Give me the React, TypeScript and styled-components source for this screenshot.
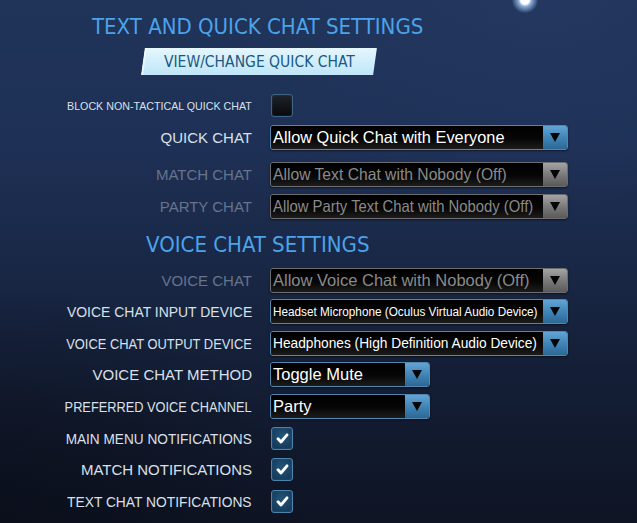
import React from 'react';
import styled, { createGlobalStyle } from 'styled-components';

const GlobalStyle = createGlobalStyle`
  html, body {
    margin: 0;
    padding: 0;
    background: #0f1628;
  }
  * {
    box-sizing: border-box;
  }
`;

const Screen = styled.div`
  position: relative;
  width: 637px;
  height: 523px;
  overflow: hidden;
  padding-top: 14px;
  font-family: 'Liberation Sans', Arial, sans-serif;
  background:
    radial-gradient(ellipse 420px 320px at 0% 100%, rgba(8, 10, 18, 0.55), transparent 75%),
    radial-gradient(ellipse 520px 300px at 85% 0%, rgba(38, 60, 104, 0.5), transparent 70%),
    linear-gradient(180deg, #203358 0%, #1e3055 28%, #182643 55%, #121b30 80%, #0e1424 100%);
`;

// bright spot of the menu item above, cut off by the top edge
const Glint = styled.div`
  position: absolute;
  left: 511px;
  top: -13px;
  width: 28px;
  height: 26px;
  border-radius: 50%;
  background: radial-gradient(circle at center, #ffffff 0 22%, rgba(170, 210, 255, 0.75) 34%, rgba(60, 120, 220, 0) 70%);
`;

const Heading = styled.h2<{ $indent: number }>`
  margin: 0 0 0 ${(p) => p.$indent}px;
  font-family: 'DejaVu Sans', sans-serif;
  font-stretch: condensed;
  font-weight: 400;
  font-size: 22px;
  line-height: 26px;
  color: #4ba3ea;
  white-space: nowrap;
`;

const VoiceHeading = styled(Heading)`
  margin-top: 10px;
  margin-bottom: 6px;
`;

const QuickChatButton = styled.button`
  display: flex;
  align-items: center;
  justify-content: center;
  width: 232px;
  height: 27px;
  margin: 8px 0 0 143px;
  padding: 0;
  border: none;
  transform: skewX(-8deg);
  background: linear-gradient(180deg, #e6f6fd 0%, #d2effb 45%, #c0e6f8 100%);
  box-shadow: inset 2px 0 0 rgba(255, 255, 255, 0.6);
  color: #1c5882;
  font-family: 'DejaVu Sans', sans-serif;
  font-stretch: condensed;
  font-size: 15.5px;

  span {
    transform: skewX(8deg);
  }
`;

const SettingsList = styled.div`
  margin-top: 15px;
`;

const SettingRow = styled.div<{ $gap?: number }>`
  display: grid;
  grid-template-columns: 252px max-content;
  column-gap: 18px;
  align-items: center;
  height: 31.6px;
  margin-top: ${(p) => p.$gap ?? 0}px;
`;

const Label = styled.span<{ $muted?: boolean; $size?: number; $fit?: number }>`
  display: inline-block;
  justify-self: end;
  white-space: nowrap;
  color: ${(p) => (p.$muted ? '#66748c' : '#d9e0ea')};
  font-size: ${(p) => p.$size ?? 15}px;
  transform: scaleX(${(p) => p.$fit ?? 1});
  transform-origin: right center;
`;

const Select = styled.div<{ $width: number; $disabled?: boolean }>`
  display: flex;
  width: ${(p) => p.$width}px;
  height: 25px;
  border: 1px solid ${(p) => (p.$disabled ? '#6d6d6d' : '#5487b0')};
  border-radius: 3px;
  overflow: hidden;
  box-shadow: 0 1px 2px rgba(0, 0, 0, 0.5);
`;

const SelectValue = styled.div<{ $disabled?: boolean }>`
  flex: 1;
  min-width: 0;
  display: flex;
  align-items: center;
  padding-left: 2px;
  overflow: hidden;
  background: linear-gradient(180deg, #000 0%, #060606 55%, #1c1c1c 100%);
  color: ${(p) => (p.$disabled ? '#8a8a8a' : '#ffffff')};
`;

const ValueText = styled.span<{ $size?: number; $fit?: number }>`
  display: inline-block;
  white-space: nowrap;
  font-size: ${(p) => p.$size ?? 16.5}px;
  transform: scaleX(${(p) => p.$fit ?? 1});
  transform-origin: left center;
`;

const SelectArrow = styled.div<{ $disabled?: boolean }>`
  width: 24px;
  display: flex;
  align-items: center;
  justify-content: center;
  background: ${(p) =>
    p.$disabled
      ? 'linear-gradient(180deg, #a4a4a4 0%, #777 55%, #5a5a5a 100%)'
      : 'linear-gradient(180deg, #62a5d5 0%, #4185b7 50%, #2c6895 100%)'};

  &::after {
    content: '';
    border-left: 5.5px solid transparent;
    border-right: 5.5px solid transparent;
    border-top: 9px solid #050505;
  }
`;

const Checkbox = styled.div<{ $checked?: boolean }>`
  display: flex;
  align-items: center;
  justify-content: center;
  width: 22px;
  height: 23px;
  margin-left: 1px;
  border-radius: 3px;
  border: 1px solid ${(p) => (p.$checked ? '#4c83aa' : '#3b6580')};
  background: ${(p) =>
    p.$checked
      ? 'radial-gradient(circle at 50% 40%, #23567c 0%, #163b5a 75%)'
      : 'linear-gradient(180deg, #1f2229 0%, #08090c 100%)'};
  box-shadow: inset 0 0 2px rgba(120, 180, 230, 0.25);
`;

const CheckMark = () => (
  <svg width="13" height="11" viewBox="0 0 13 11">
    <path
      d="M2 5.8 L5 9 L11 1.8"
      fill="none"
      stroke="#ffffff"
      strokeWidth="2.8"
      strokeLinecap="round"
      strokeLinejoin="round"
    />
  </svg>
);

type DropdownProps = {
  value: string;
  width?: number;
  disabled?: boolean;
  size?: number;
  fit?: number;
};

const Dropdown = ({ value, width = 298, disabled, size, fit }: DropdownProps) => (
  <Select $width={width} $disabled={disabled}>
    <SelectValue $disabled={disabled}>
      <ValueText $size={size} $fit={fit}>
        {value}
      </ValueText>
    </SelectValue>
    <SelectArrow $disabled={disabled} />
  </Select>
);

const App = () => {
  return (
    <Screen>
      <GlobalStyle />
      <Glint />
      <Heading $indent={92}>TEXT AND QUICK CHAT SETTINGS</Heading>
      <QuickChatButton>
        <span>VIEW/CHANGE QUICK CHAT</span>
      </QuickChatButton>

      <SettingsList>
        <SettingRow>
          <Label $size={11.6} $fit={0.92}>
            BLOCK NON-TACTICAL QUICK CHAT
          </Label>
          <Checkbox />
        </SettingRow>
        <SettingRow>
          <Label>QUICK CHAT</Label>
          <Dropdown value="Allow Quick Chat with Everyone" fit={0.99} />
        </SettingRow>
        <SettingRow $gap={6}>
          <Label $muted>MATCH CHAT</Label>
          <Dropdown value="Allow Text Chat with Nobody (Off)" disabled fit={0.95} />
        </SettingRow>
        <SettingRow>
          <Label $muted>PARTY CHAT</Label>
          <Dropdown value="Allow Party Text Chat with Nobody (Off)" disabled fit={0.9} />
        </SettingRow>

        <VoiceHeading $indent={146}>VOICE CHAT SETTINGS</VoiceHeading>

        <SettingRow>
          <Label $muted>VOICE CHAT</Label>
          <Dropdown value="Allow Voice Chat with Nobody (Off)" disabled />
        </SettingRow>
        <SettingRow>
          <Label $fit={0.93}>VOICE CHAT INPUT DEVICE</Label>
          <Dropdown value="Headset Microphone (Oculus Virtual Audio Device)" size={12} fit={0.98} />
        </SettingRow>
        <SettingRow>
          <Label $fit={0.86}>VOICE CHAT OUTPUT DEVICE</Label>
          <Dropdown value="Headphones (High Definition Audio Device)" size={14} fit={0.98} />
        </SettingRow>
        <SettingRow>
          <Label>VOICE CHAT METHOD</Label>
          <Dropdown value="Toggle Mute" width={160} />
        </SettingRow>
        <SettingRow>
          <Label $size={14} $fit={0.914}>
            PREFERRED VOICE CHANNEL
          </Label>
          <Dropdown value="Party" width={160} />
        </SettingRow>
        <SettingRow>
          <Label $fit={0.909}>MAIN MENU NOTIFICATIONS</Label>
          <Checkbox $checked>
            <CheckMark />
          </Checkbox>
        </SettingRow>
        <SettingRow>
          <Label>MATCH NOTIFICATIONS</Label>
          <Checkbox $checked>
            <CheckMark />
          </Checkbox>
        </SettingRow>
        <SettingRow>
          <Label $fit={0.92}>TEXT CHAT NOTIFICATIONS</Label>
          <Checkbox $checked>
            <CheckMark />
          </Checkbox>
        </SettingRow>
      </SettingsList>
    </Screen>
  );
};

export default App;
